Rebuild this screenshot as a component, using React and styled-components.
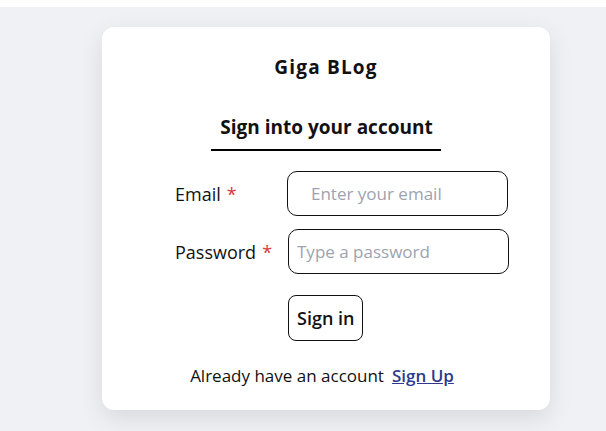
import React from "react";
import styled, { createGlobalStyle } from "styled-components";

const Global = createGlobalStyle`
  html, body { margin: 0; padding: 0; background: #ffffff; }
  body { padding-top: 7px; font-family: "Open Sans", "Noto Sans", Arial, sans-serif; color: #111; }
  * { box-sizing: border-box; }
`;

const Page = styled.div`
  background: #f0f1f5;
  min-height: 424px;
  padding: 20px 0 22px 102px;
`;

const Card = styled.div`
  width: 448px;
  background: #fff;
  border-radius: 12px;
  box-shadow: 0 8px 24px rgba(0, 0, 0, 0.10);
  padding: 28px 0 22px;
  display: flex;
  flex-direction: column;
  align-items: center;
`;

const Brand = styled.h1`
  margin: 0;
  font-size: 19px;
  font-weight: 700;
  letter-spacing: 1.2px;
  line-height: 24px;
`;

const Heading = styled.h2`
  margin: 36px 0 0;
  font-size: 19px;
  font-weight: 700;
  line-height: 25px;
  padding: 0 8px 9px 9px;
  border-bottom: 2px solid #000;
`;

const Form = styled.form`
  margin: 20px 0 0 73px;
  align-self: flex-start;
  display: grid;
  grid-template-columns: 112px 222px;
  row-gap: 13px;
  align-items: center;
`;

const Label = styled.label`
  font-size: 18px;
  line-height: 24px;
  white-space: nowrap;
`;

const Star = styled.span`
  color: #d9363e;
  margin-left: 6px;
`;

const Input = styled.input`
  height: 45px;
  width: 221px;
  border: 1px solid #111;
  border-radius: 10px;
  padding: 0 0 0 ${(p) => p.$pad}px;
  font-family: inherit;
  font-size: 17px;
  margin-left: ${(p) => p.$shift}px;
  outline: none;
  &::placeholder { color: #9ca3af; }
`;

const ButtonRow = styled.div`
  grid-column: 2;
  margin-top: 8px;
  padding-left: 1px;
`;

const Button = styled.button`
  height: 46px;
  padding: 0 8px;
  background: #fff;
  border: 1px solid #111;
  border-radius: 8px;
  font-family: inherit;
  font-size: 18px;
  font-weight: 600;
  color: #111;
`;

const Footer = styled.p`
  margin: 23px 8px 0 0;
  font-size: 17px;
  line-height: 24px;
  display: flex;
  gap: 8px;
`;

const Link = styled.a`
  color: #2b3a8c;
  font-weight: 600;
  text-decoration: underline;
`;

export default function App() {
  return (
    <>
      <Global />
      <Page>
        <Card>
          <Brand>Giga BLog</Brand>
          <Heading>Sign into your account</Heading>
          <Form onSubmit={(e) => e.preventDefault()}>
            <Label htmlFor="email">
              Email<Star>*</Star>
            </Label>
            <Input id="email" type="email" placeholder="Enter your email" $pad={23} $shift={0} />
            <Label htmlFor="password">
              Password<Star>*</Star>
            </Label>
            <Input id="password" type="password" placeholder="Type a password" $pad={8} $shift={1} />
            <ButtonRow>
              <Button type="submit">Sign in</Button>
            </ButtonRow>
          </Form>
          <Footer>
            Already have an account <Link href="#">Sign Up</Link>
          </Footer>
        </Card>
      </Page>
    </>
  );
}
